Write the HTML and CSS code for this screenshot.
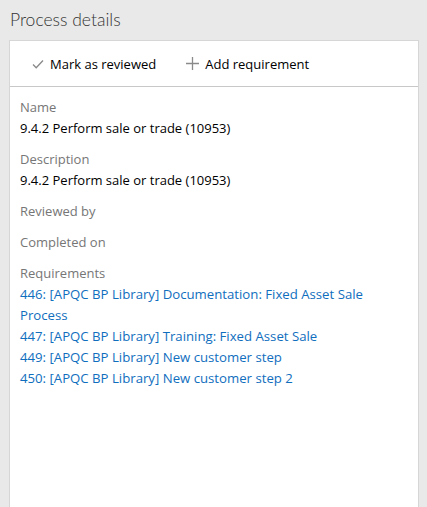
FILE: index.html
```html
<!DOCTYPE html>
<html>
<head>
<meta charset="utf-8">
<link rel="stylesheet" href="styles.css">
</head>
<body>
<div class="page">
  <h1 class="title">Process details</h1>
  <div class="card">
    <div class="toolbar">
      <button class="tool">
        <svg class="icon" width="12" height="12" viewBox="0 0 12 12"><path d="M1 6.5 L4.2 9.7 L11 2.5" fill="none" stroke="#8a8a8a" stroke-width="1.3"/></svg>
        <span>Mark as reviewed</span>
      </button>
      <button class="tool">
        <svg class="icon" width="13" height="13" viewBox="0 0 13 13"><path d="M6.5 0 V13 M0 6.5 H13" fill="none" stroke="#8a8a8a" stroke-width="1.3"/></svg>
        <span>Add requirement</span>
      </button>
    </div>
    <div class="fields">
      <div class="field">
        <div class="label">Name</div>
        <div class="value">9.4.2 Perform sale or trade (10953)</div>
      </div>
      <div class="field">
        <div class="label">Description</div>
        <div class="value">9.4.2 Perform sale or trade (10953)</div>
      </div>
      <div class="field">
        <div class="label">Reviewed by</div>
      </div>
      <div class="field">
        <div class="label">Completed on</div>
      </div>
      <div class="field">
        <div class="label">Requirements</div>
        <a class="link" href="#">446: [APQC BP Library] Documentation: Fixed Asset Sale Process</a>
        <a class="link" href="#">447: [APQC BP Library] Training: Fixed Asset Sale</a>
        <a class="link" href="#">449: [APQC BP Library] New customer step</a>
        <a class="link" href="#">450: [APQC BP Library] New customer step 2</a>
      </div>
    </div>
  </div>
</div>
</body>
</html>
```
FILE: styles.css
```css
html, body {
  margin: 0;
  padding: 0;
  height: 100%;
  background: #e9e9e9;
  font-family: "Open Sans", "Noto Sans", sans-serif;
  overflow: hidden;
}
.page {
  display: flex;
  flex-direction: column;
  height: 100%;
  padding: 0 8px 0 9px;
  box-sizing: border-box;
}
.title {
  margin: 0;
  padding: 8px 0 0 1px;
  height: 40px;
  box-sizing: border-box;
  font-family: "Lato", sans-serif;
  font-size: 17.5px;
  font-weight: 300;
  color: #333;
  line-height: 24px;
}
.card {
  flex: 1;
  background: #fff;
  border: 1px solid #d6d6d6;
  border-bottom: none;
}
.toolbar {
  display: flex;
  align-items: center;
  gap: 30px;
  height: 46px;
  padding-left: 22px;
  border-bottom: 1px solid #c8c8c8;
  box-sizing: border-box;
}
.tool {
  display: flex;
  align-items: center;
  gap: 6px;
  border: none;
  background: none;
  padding: 0;
  font: inherit;
  font-size: 13px;
  color: #000;
}
.fields {
  padding: 10px 10px 0 10px;
}
.field {
  margin-bottom: 10px;
  font-size: 13px;
  line-height: 21px;
}
.label {
  color: #767676;
}
.value {
  color: #000;
}
.link {
  display: block;
  color: #106ebe;
  font-size: 13.2px;
  text-decoration: none;
}
```
